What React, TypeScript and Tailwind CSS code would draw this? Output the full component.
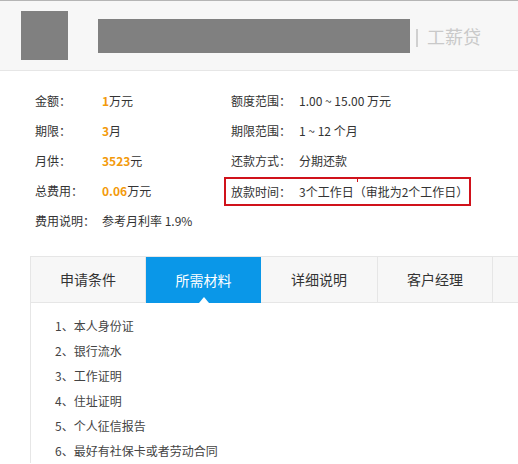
import React from 'react';

const font = { fontFamily: '"Noto Sans CJK SC", "Noto Sans", sans-serif' };

const Orange: React.FC<{ children: React.ReactNode }> = ({ children }) => (
  <span className="font-bold text-[#f39a0b]">{children}</span>
);

const tabs = [
  { label: '申请条件', w: 'w-[115px]' },
  { label: '所需材料', w: 'w-[115px]', active: true },
  { label: '详细说明', w: 'w-[117px]' },
  { label: '客户经理', w: 'w-[115px]' },
  { label: '', w: 'w-[40px]' },
];

const materials = ['本人身份证', '银行流水', '工作证明', '住址证明', '个人征信报告', '最好有社保卡或者劳动合同'];

export default function App() {
  return (
    <div className="w-[518px] h-[464px] overflow-hidden bg-white text-[#333]" style={font}>
      {/* header */}
      <div className="h-[71px] border-t border-b border-t-[#b5b5b5] border-b-[#e6e6e6] bg-[#f7f7f7] flex items-start pl-[21px] pt-[10px]">
        <div className="w-[47px] h-[49px] bg-[#808080]" />
        <div className="ml-[30px] mt-[8px] w-[312px] h-[34px] bg-[#808080]" />
        <div className="ml-[6px] mt-[18px] w-[2px] h-[18px] bg-[#d0d0d0]" />
        <div className="ml-[9px] mt-[13px] text-[18px] leading-[24px] text-[#c9c9c9]">工薪贷</div>
      </div>

      {/* info */}
      <div className="pt-[15px] pl-[35px] text-[12px]">
        <div className="flex h-[30px] items-center">
          <div className="flex w-[196px]"><span className="w-[67px]">金额：</span><span><Orange>1</Orange>万元</span></div>
          <div className="flex"><span className="w-[68px]">额度范围：</span><span>1.00 ~ 15.00 万元</span></div>
        </div>
        <div className="flex h-[30px] items-center">
          <div className="flex w-[196px]"><span className="w-[67px]">期限：</span><span><Orange>3</Orange>月</span></div>
          <div className="flex"><span className="w-[68px]">期限范围：</span><span>1 ~ 12 个月</span></div>
        </div>
        <div className="flex h-[30px] items-center">
          <div className="flex w-[196px]"><span className="w-[67px]">月供：</span><span><Orange>3523</Orange>元</span></div>
          <div className="flex"><span className="w-[68px]">还款方式：</span><span>分期还款</span></div>
        </div>
        <div className="flex h-[30px] items-center">
          <div className="flex w-[196px]"><span className="w-[67px]">总费用：</span><span><Orange>0.06</Orange>万元</span></div>
          <div className="relative ml-[-7px] mt-[1px] flex h-[29px] w-[247px] items-center border-2 border-[#d0121b] pl-[5px]">
            <span className="w-[68px]">放款时间：</span>
            <span>3个工作日（审批为2个工作日）</span>
            <span className="absolute left-[131px] top-0 h-[3px] w-px bg-[#d0121b]" />
          </div>
        </div>
        <div className="flex h-[30px] items-center">
          <span className="w-[67px]">费用说明：</span><span>参考月利率 1.9%</span>
        </div>
      </div>

      {/* tabs */}
      <div className="ml-[30px] mt-[20px] border-l border-[#e6e6e6]">
        <div className="flex border-t border-[#e6e6e6]">
          {tabs.map((t, i) => (
            <div
              key={i}
              className={
                t.active
                  ? `relative ${t.w} shrink-0 h-[46px] flex items-center justify-center bg-[#0a97e8] text-white text-[14px]`
                  : `${t.w} shrink-0 h-[46px] flex items-center justify-center bg-[#f7f7f7] border-b border-r border-[#e6e6e6] text-[14px] text-[#333]`
              }
            >
              {t.label}
              {t.active && (
                <span className="absolute bottom-0 left-1/2 -translate-x-1/2 w-0 h-0 border-x-[5px] border-b-[6px] border-x-transparent border-b-white" />
              )}
            </div>
          ))}
        </div>
        <div className="pt-[10px] pl-[24px] text-[12px] text-[#444]">
          {materials.map((m, i) => (
            <div key={i} className="h-[25px] flex items-center">
              {i + 1}、{m}
            </div>
          ))}
        </div>
      </div>
    </div>
  );
}
